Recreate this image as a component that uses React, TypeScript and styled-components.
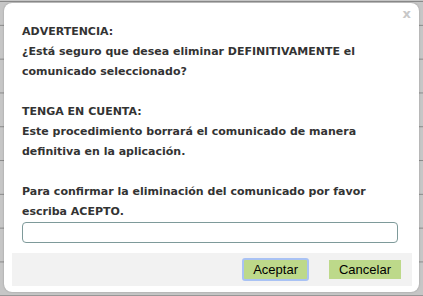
import React from "react";
import styled, { createGlobalStyle } from "styled-components";

const Global = createGlobalStyle`
  html, body { margin: 0; padding: 0; }
  body {
    width: 423px;
    height: 296px;
    overflow: hidden;
    background-color: #c6c6c6;
    background-image:
      linear-gradient(to bottom, transparent 1px, #8a8a8a 1px, #8a8a8a 2px, transparent 2px),
      repeating-linear-gradient(
        to bottom,
        transparent 0px,
        transparent 25px,
        #8a8a8a 25px,
        #8a8a8a 26px,
        transparent 26px,
        transparent 33.8px
      );
    background-size: 100% 3px, 100% 33.8px;
    background-repeat: no-repeat, repeat-y;
    background-position: 0 0, 0 0;
  }
`;

const Dialog = styled.div`
  position: relative;
  box-sizing: border-box;
  margin: 3px 0 0 4px;
  width: 415px;
  height: 289px;
  background: #ffffff;
  border-radius: 8px;
  box-shadow: 0 0 2px rgba(0, 0, 0, 0.25);
  display: flex;
  flex-direction: column;
  font-family: "DejaVu Sans", Verdana, sans-serif;
`;

const Close = styled.span`
  position: absolute;
  top: 3px;
  right: 8px;
  font-family: "DejaVu Sans", Verdana, sans-serif;
  font-weight: bold;
  font-size: 13px;
  color: #c8c8c8;
`;

const Body = styled.div`
  padding: 19px 21px 0 18px;
  font-size: 11px;
  font-weight: bold;
  line-height: 20px;
  color: #333333;
`;

const Para = styled.p`
  margin: 0 0 20px 0;
  &:last-of-type { margin-bottom: 0; }
`;

const Input = styled.input`
  display: block;
  box-sizing: border-box;
  width: 376px;
  height: 21px;
  border: 1px solid #7e9a9a;
  border-radius: 4px;
  background: #fff;
  outline: none;
`;

const Footer = styled.div`
  margin: 10px 7px 0 8px;
  height: 33px;
  background: #f2f2f2;
  display: flex;
  justify-content: flex-end;
  align-items: center;
  gap: 20px;
  padding-right: 11px;
`;

const Button = styled.button<{ $focused?: boolean }>`
  box-sizing: border-box;
  height: ${(p) => (p.$focused ? "23px" : "19px")};
  padding: 0 ${(p) => (p.$focused ? "9px" : "10px")};
  background: #bdd98a;
  border: ${(p) => (p.$focused ? "2px solid #a9c2f4" : "none")};
  border-radius: ${(p) => (p.$focused ? "3px" : "0")};
  font-family: "Liberation Sans", Arial, sans-serif;
  font-size: 13px;
  color: #000000;
  cursor: pointer;
`;

export default function App() {
  return (
    <>
      <Global />
      <Dialog>
        <Close>x</Close>
        <Body>
          <Para>
            ADVERTENCIA:
            <br />
            ¿Está seguro que desea eliminar DEFINITIVAMENTE el comunicado seleccionado?
          </Para>
          <Para>
            TENGA EN CUENTA:
            <br />
            Este procedimiento borrará el comunicado de manera definitiva en la aplicación.
          </Para>
          <Para>
            Para confirmar la eliminación del comunicado por favor escriba ACEPTO.
          </Para>
          <Input type="text" />
        </Body>
        <Footer>
          <Button $focused>Aceptar</Button>
          <Button>Cancelar</Button>
        </Footer>
      </Dialog>
    </>
  );
}
